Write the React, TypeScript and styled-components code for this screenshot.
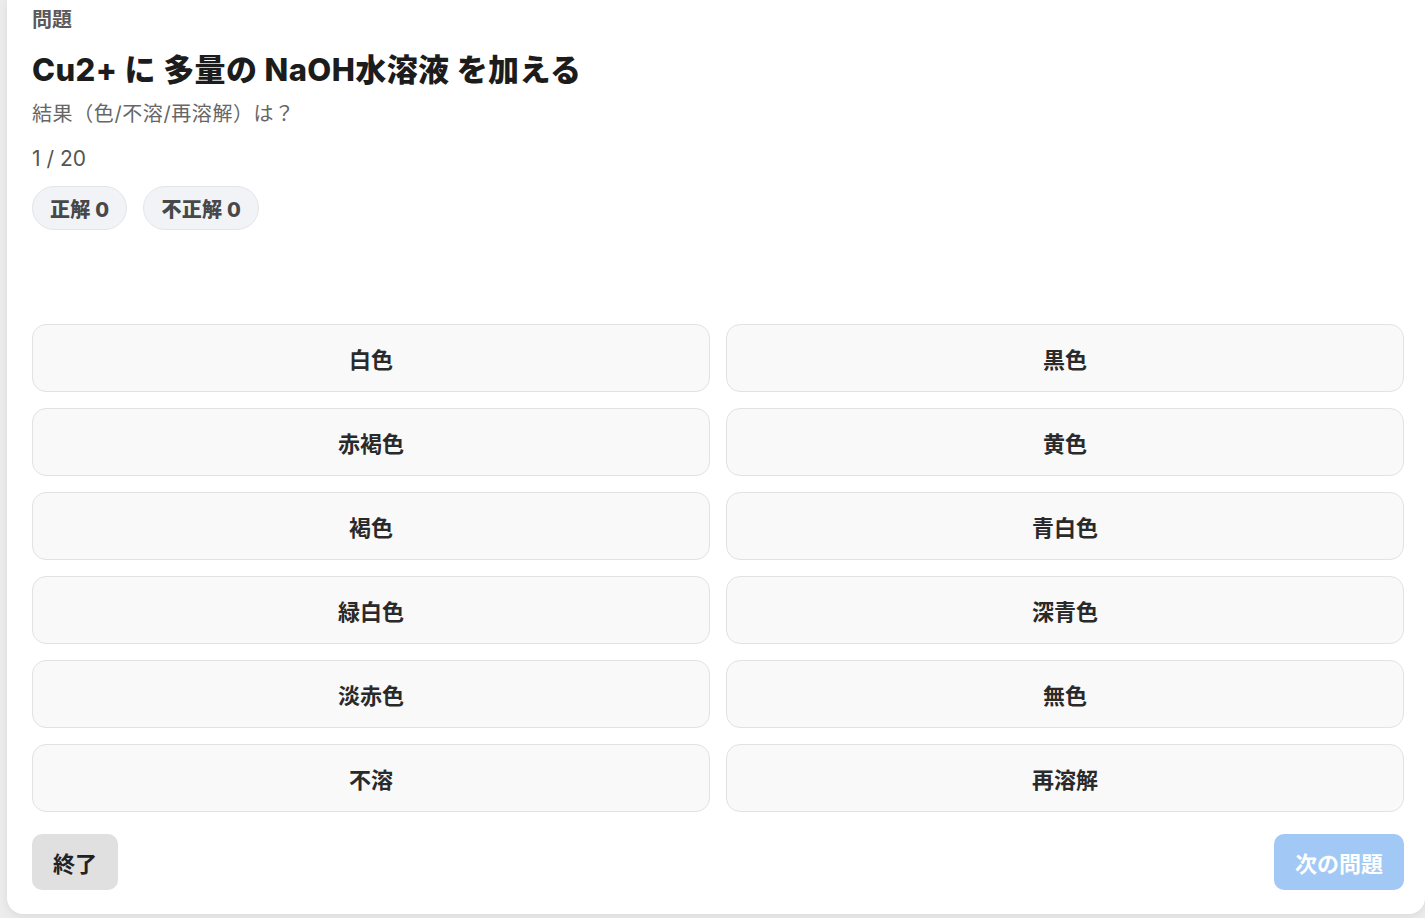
import React from "react";
import styled, { createGlobalStyle } from "styled-components";

const GlobalStyle = createGlobalStyle`
  html, body {
    margin: 0;
    padding: 0;
    background: #ececec;
  }
  body {
    font-family: Inter, "Noto Sans CJK JP", sans-serif;
    color: #1f1f1f;
    overflow: hidden;
  }
`;

const Page = styled.div`
  width: 1425px;
  height: 918px;
  padding-left: 7px;
  box-sizing: border-box;
`;

const Card = styled.main`
  background: #ffffff;
  border-radius: 0 0 16px 16px;
  box-shadow: 0 2px 8px rgba(0, 0, 0, 0.08);
  padding: 8px 21px 24px 25px;
  box-sizing: border-box;
  display: flex;
  flex-direction: column;
`;

const Label = styled.div`
  font-size: 20px;
  line-height: 24px;
  font-weight: 700;
  color: #5a5a5a;
`;

const Title = styled.h1`
  margin: 18px 0 0;
  font-size: 31px;
  line-height: 40px;
  font-weight: 800;
  color: #1c1c1c;
  letter-spacing: 0.4px;
`;

const Subtitle = styled.p`
  margin: 11px 0 0;
  font-size: 20px;
  line-height: 26px;
  color: #666666;
  letter-spacing: 0.6px;
`;

const Counter = styled.div`
  margin-top: 19px;
  font-size: 21px;
  line-height: 26px;
  color: #555555;
`;

const Pills = styled.div`
  display: flex;
  gap: 16px;
  margin-top: 14px;
`;

const Pill = styled.span`
  display: inline-flex;
  align-items: center;
  height: 44px;
  padding: 0 17px;
  box-sizing: border-box;
  border-radius: 999px;
  background: #f1f3f6;
  border: 1px solid #e2e5ea;
  font-size: 20px;
  font-weight: 800;
  color: #484848;
  letter-spacing: 0.3px;
`;

const Feedback = styled.div`
  height: 94px;
`;

const Choices = styled.div`
  display: grid;
  grid-template-columns: 1fr 1fr;
  grid-auto-rows: 68px;
  gap: 16px;
`;

const Choice = styled.button`
  background: #f9f9f9;
  border: 1px solid #e2e2e2;
  border-radius: 14px;
  font-family: inherit;
  font-size: 22px;
  font-weight: 700;
  color: #2a2a2a;
  cursor: pointer;
`;

const Footer = styled.div`
  margin-top: 22px;
  display: flex;
  justify-content: space-between;
`;

const ActionButton = styled.button<{ $primary?: boolean }>`
  height: 56px;
  padding: 0 21px;
  border: none;
  border-radius: 10px;
  font-family: inherit;
  font-size: 22px;
  font-weight: 700;
  background: ${(p) => (p.$primary ? "#a2c9f5" : "#e0e0e0")};
  color: ${(p) => (p.$primary ? "#ffffff" : "#222222")};
`;

const options = [
  "白色",
  "黒色",
  "赤褐色",
  "黄色",
  "褐色",
  "青白色",
  "緑白色",
  "深青色",
  "淡赤色",
  "無色",
  "不溶",
  "再溶解",
];

export default function App() {
  return (
    <Page>
      <GlobalStyle />
      <Card>
        <Label>問題</Label>
        <Title>Cu2+ に 多量の NaOH水溶液 を加える</Title>
        <Subtitle>結果（色/不溶/再溶解）は？</Subtitle>
        <Counter>1 / 20</Counter>
        <Pills>
          <Pill>正解 0</Pill>
          <Pill>不正解 0</Pill>
        </Pills>
        <Feedback />
        <Choices>
          {options.map((o) => (
            <Choice key={o} type="button">
              {o}
            </Choice>
          ))}
        </Choices>
        <Footer>
          <ActionButton type="button">終了</ActionButton>
          <ActionButton type="button" $primary disabled>
            次の問題
          </ActionButton>
        </Footer>
      </Card>
    </Page>
  );
}
